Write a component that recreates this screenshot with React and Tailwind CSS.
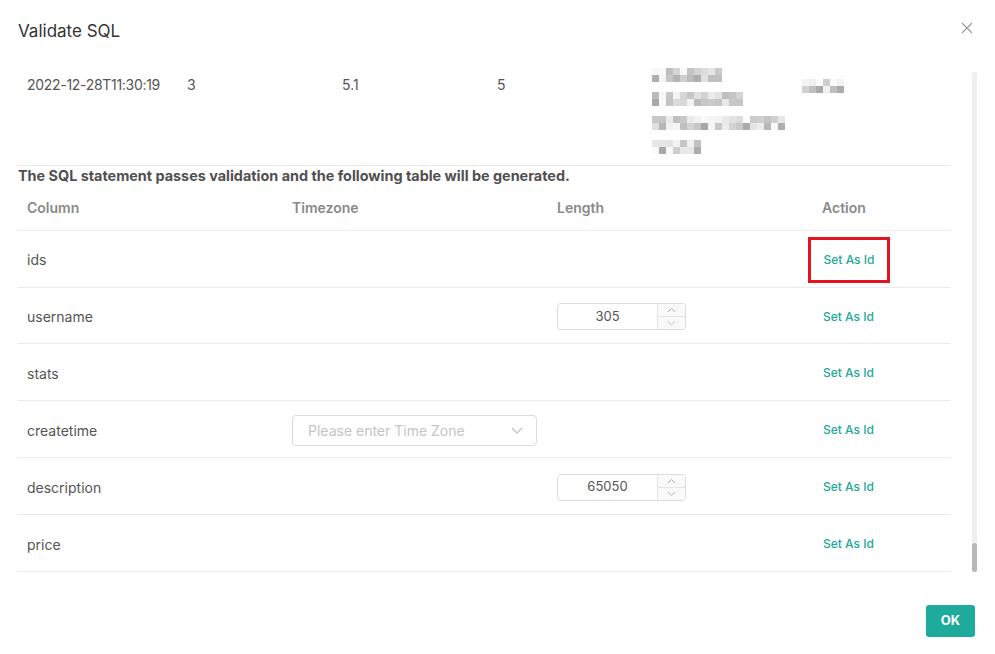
import React from "react";

function Mosaic({ widths, seed }) {
  let s = seed;
  const rnd = () => {
    s = (s * 9301 + 49297) % 233280;
    return s / 233280;
  };
  return (
    <div className="flex flex-col gap-[10px]">
      {widths.map((w, li) => {
        const n = Math.round(w / 7);
        return (
          <div key={li} className="flex flex-col">
            {[0, 1].map((r) => (
              <div key={r} className="flex">
                {Array.from({ length: n }).map((_, i) => {
                  const x = rnd();
                  const v = Math.round(r === 0 ? 185 + x * 70 : 165 + x * 85);
                  return (
                    <div
                      key={i}
                      className="w-[7px] h-[7px]"
                      style={{ backgroundColor: `rgb(${v},${v},${v})` }}
                    />
                  );
                })}
              </div>
            ))}
          </div>
        );
      })}
    </div>
  );
}

function NumberInput({ value }) {
  return (
    <div className="flex w-[129px] h-[27px] border border-[#dcdcdc] rounded-[4px] overflow-hidden bg-white">
      <div className="flex-1 flex items-center justify-center text-[13px] text-[#555]">{value}</div>
      <div className="w-[28px] flex flex-col border-l border-[#e4e4e4] bg-[#fafafa]">
        <div className="flex-1 flex items-center justify-center border-b border-[#e4e4e4]">
          <svg width="9" height="6" viewBox="0 0 9 6" fill="none" stroke="#aaa" strokeWidth="1">
            <path d="M1 5 L4.5 1.5 L8 5" />
          </svg>
        </div>
        <div className="flex-1 flex items-center justify-center">
          <svg width="9" height="6" viewBox="0 0 9 6" fill="none" stroke="#bbb" strokeWidth="1">
            <path d="M1 1 L4.5 4.5 L8 1" />
          </svg>
        </div>
      </div>
    </div>
  );
}

function SetAsId({ boxed }) {
  return (
    <div
      className={
        boxed
          ? "inline-flex items-center justify-center w-[82px] h-[46px] border-[3px] border-[#e3141f] -ml-[15px]"
          : "inline-flex"
      }
    >
      <span className="text-[12px] font-medium text-[#21a898]">Set As Id</span>
    </div>
  );
}

const rows = [
  { name: "ids", boxed: true },
  { name: "username", length: "305" },
  { name: "stats" },
  { name: "createtime", tz: true },
  { name: "description", length: "65050" },
  { name: "price" },
];

export default function App() {
  return (
    <div
      className="w-[995px] h-[654px] bg-white flex flex-col overflow-hidden"
      style={{ fontFamily: "Inter, 'Noto Sans', sans-serif" }}
    >
      {/* Header */}
      <div className="h-[62px] flex items-start justify-between pl-[18px] pr-[22px] pt-[19px] shrink-0">
        <div className="text-[17px] text-[#333] leading-[24px]">Validate SQL</div>
        <svg width="12" height="12" viewBox="0 0 12 12" className="mt-[3px]" stroke="#999" strokeWidth="1.1">
          <path d="M1 1 L11 11 M11 1 L1 11" />
        </svg>
      </div>

      {/* Body */}
      <div className="flex h-[510px] shrink-0">
        <div className="w-[934px] ml-[17px] flex flex-col">
          {/* Top data row (partially scrolled) */}
          <div className="h-[104px] flex border-b border-[#ebebeb] text-[14px] text-[#555]">
            <div className="w-[160px] pl-[10px] pt-[11px] leading-[24px] tracking-[-0.3px]">2022-12-28T11:30:19</div>
            <div className="w-[155px] pl-[10px] pt-[11px] leading-[24px]">3</div>
            <div className="w-[155px] pl-[10px] pt-[11px] leading-[24px]">5.1</div>
            <div className="w-[155px] pl-[10px] pt-[11px] leading-[24px]">5</div>
            <div className="w-[150px] pl-[10px] pt-[6px]">
              <Mosaic widths={[70, 91, 133, 49]} seed={17} />
            </div>
            <div className="pl-[10px] pt-[17px]">
              <Mosaic widths={[42]} seed={91} />
            </div>
          </div>

          <div className="h-[20px] flex items-center text-[14.4px] font-bold text-[#505050] pl-[1px]">
            The SQL statement passes validation and the following table will be generated.
          </div>

          {/* Table header */}
          <div className="h-[45px] flex items-center border-b border-[#ebebeb] text-[14px] font-semibold text-[#8a8a8a]">
            <div className="w-[265px] pl-[10px]">Column</div>
            <div className="w-[265px] pl-[10px]">Timezone</div>
            <div className="w-[265px] pl-[10px]">Length</div>
            <div className="flex-1 pl-[10px]">Action</div>
          </div>

          {rows.map((r) => (
            <div
              key={r.name}
              className="h-[57px] flex items-center pt-[2px] border-b border-[#ebebeb] text-[14px] text-[#555]"
            >
              <div className="w-[265px] pl-[10px]">{r.name}</div>
              <div className="w-[265px] pl-[10px]">
                {r.tz && (
                  <div className="w-[245px] h-[31px] border border-[#dcdcdc] rounded-[4px] flex items-center justify-between pl-[15px] pr-[13px]">
                    <span className="text-[14px] text-[#c4c4c4]">Please enter Time Zone</span>
                    <svg width="12" height="7" viewBox="0 0 12 7" fill="none" stroke="#bbb" strokeWidth="1.1">
                      <path d="M1 1 L6 6 L11 1" />
                    </svg>
                  </div>
                )}
              </div>
              <div className="w-[265px] pl-[10px]">
                {r.length && <NumberInput value={r.length} />}
              </div>
              <div className="flex-1 pl-[11px] flex items-center">
                <SetAsId boxed={r.boxed} />
              </div>
            </div>
          ))}
        </div>

        {/* Scrollbar */}
        <div className="ml-[21px] pt-[10px] flex flex-col">
          <div className="w-[5px] h-[500px] bg-[#efefef] rounded-[3px] flex flex-col justify-end">
            <div className="w-[5px] h-[29px] bg-[#b8b8b8] rounded-[3px]" />
          </div>
        </div>
      </div>

      {/* Footer */}
      <div className="flex justify-end pr-[20px] pt-[33px]">
        <button className="w-[49px] h-[32px] bg-[#1fab9b] rounded-[3px] text-white text-[13px] font-bold">
          OK
        </button>
      </div>
    </div>
  );
}
